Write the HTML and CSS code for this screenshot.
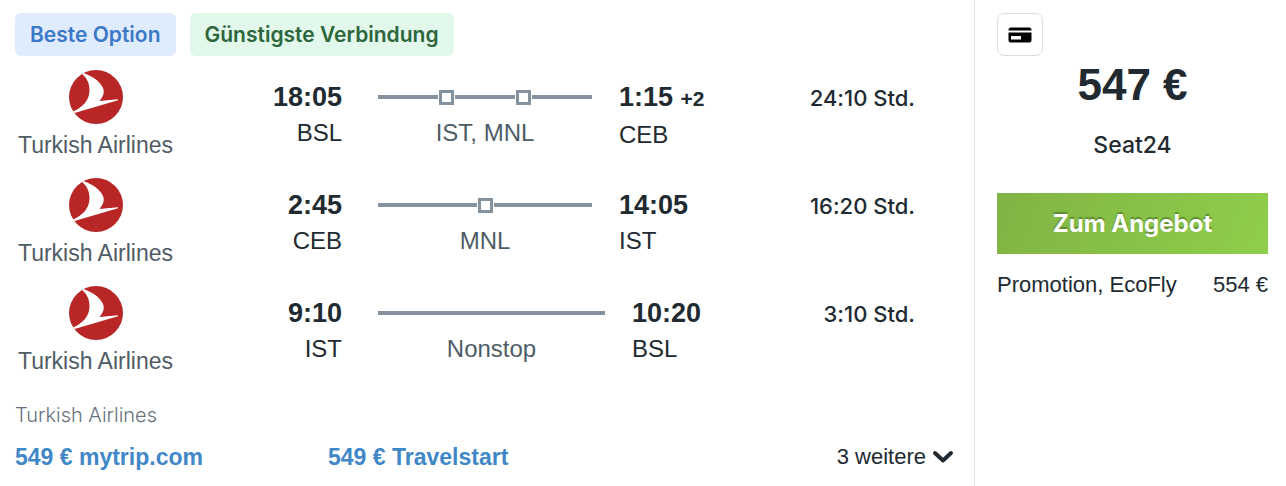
FILE: index.html
```html
<!DOCTYPE html>
<html lang="de">
<head>
    <meta charset="UTF-8">
    <meta name="viewport" content="width=device-width, initial-scale=1">
    <title>Flugangebot</title>
    <link rel="stylesheet" href="styles.css">
</head>
<body>
    <svg class="sprite" aria-hidden="true">
        <symbol id="logo" viewBox="0 0 54 54">
            <circle cx="27" cy="27" r="27" fill="#b92626"/>
            <path d="M14.500 3C23 6 31 11 34 18C36 23 33.500 27 30.500 31L49 29.200V30.200L5.500 43L4 41.500C13 37.500 20.500 31 20.500 20C20.500 13 17.500 7.500 13 4Z" fill="#fff"/>
        </symbol>
    </svg>
    <article class="result">
        <main class="details">
            <div class="badges">
                <span class="badge badge-best">Beste Option</span>
                <span class="badge badge-cheap">Günstigste Verbindung</span>
            </div>

            <section class="leg">
                <div class="airline">
                    <svg class="logo" aria-hidden="true"><use href="#logo"/></svg>
                    <span>Turkish Airlines</span>
                </div>
                <div class="depart"><b class="time">18:05</b><span>BSL</span></div>
                <div class="route">
                    <div class="line"><i></i><em></em><i></i><em></em><i></i></div>
                    <span>IST, MNL</span>
                </div>
                <div class="arrive"><b class="time">1:15 <small>+2</small></b><span>CEB</span></div>
                <div class="duration">24:10 Std.</div>
            </section>

            <section class="leg">
                <div class="airline">
                    <svg class="logo" aria-hidden="true"><use href="#logo"/></svg>
                    <span>Turkish Airlines</span>
                </div>
                <div class="depart"><b class="time">2:45</b><span>CEB</span></div>
                <div class="route">
                    <div class="line"><i></i><em></em><i></i></div>
                    <span>MNL</span>
                </div>
                <div class="arrive"><b class="time">14:05</b><span>IST</span></div>
                <div class="duration">16:20 Std.</div>
            </section>

            <section class="leg leg-nonstop">
                <div class="airline">
                    <svg class="logo" aria-hidden="true"><use href="#logo"/></svg>
                    <span>Turkish Airlines</span>
                </div>
                <div class="depart"><b class="time">9:10</b><span>IST</span></div>
                <div class="route">
                    <div class="line"><i></i></div>
                    <span>Nonstop</span>
                </div>
                <div class="arrive"><b class="time">10:20</b><span>BSL</span></div>
                <div class="duration">3:10 Std.</div>
            </section>

            <p class="operator">Turkish Airlines</p>
            <div class="offers">
                <a href="#">549 € mytrip.com</a>
                <a href="#">549 € Travelstart</a>
                <button type="button" class="more">3 weitere
                    <svg width="22" height="14" viewBox="0 0 22 14" aria-hidden="true"><path d="M3 3L11 10.500L19 3" fill="none" stroke="#212a30" stroke-width="4" stroke-linecap="round" stroke-linejoin="round"/></svg>
                </button>
            </div>
        </main>

        <aside class="booking">
            <button type="button" class="card" aria-label="Zahlungsarten">
                <svg width="24" height="16" viewBox="0 0 24 16" aria-hidden="true">
                    <path d="M0.500 3.500V3Q0.500 0.500 3 0.500H21Q23.500 0.500 23.500 3V3.500Z"/>
                    <path fill-rule="evenodd" d="M0.500 5.500H23.500V13Q23.500 15.500 21 15.500H3Q0.500 15.500 0.500 13ZM3 9V12.500H13V9Z"/>
                </svg>
            </button>
            <div class="price">547 €</div>
            <div class="provider">Seat24</div>
            <button type="button" class="cta">Zum Angebot</button>
            <div class="fare"><span>Promotion, EcoFly</span><span>554 €</span></div>
        </aside>
    </article>
</body>
</html>
```
FILE: styles.css
```css
* {
    box-sizing: border-box;
}
body {
    margin: 0;
    background: #fff;
    color: #212a30;
    font-family: "Liberation Sans", Arial, sans-serif;
    font-size: 24px;
}
button {
    font-family: inherit;
    color: inherit;
    cursor: pointer;
}
.sprite {
    display: none;
}
.result {
    display: flex;
    min-height: 100vh;
}
.details {
    flex: 1;
    padding: 13px 20px 14px 15px;
}
.badges {
    display: flex;
    gap: 14px;
    margin-bottom: 14px;
}
.badge {
    padding: 0 15px;
    border-radius: 6px;
    font-family: Inter, sans-serif;
    font-size: 21px;
    font-weight: 600;
    line-height: 43px;
}
.badge-best {
    background: #dfecfd;
    color: #3c78c8;
}
.badge-cheap {
    background: #e2f8eb;
    color: #2d663c;
}

/* flight legs */
.leg {
    display: grid;
    grid-template-columns: 161px 166px 1fr 86px 210px;
    height: 108px;
    padding-right: 39px;
}
.leg-nonstop {
    grid-template-columns: 161px 166px 1fr 73px 210px;
}
.airline {
    display: flex;
    flex-direction: column;
    align-items: center;
    font-size: 23px;
    line-height: 42px;
    color: #4f5c66;
}
.logo {
    flex: none;
    width: 54px;
    height: 54px;
}
.depart, .arrive, .route {
    display: flex;
    flex-direction: column;
    padding-top: 9px;
    line-height: 36px;
}
.depart {
    text-align: right;
}
.time {
    font-size: 27px;
    white-space: nowrap;
}
.time small {
    font-size: 21px;
}
.route {
    padding-left: 36px;
    padding-right: 27px;
    text-align: center;
    color: #4f5c66;
}
.line {
    display: flex;
    align-items: center;
    gap: 1px;
    height: 36px;
}
.line i {
    flex: 1;
    height: 4px;
    background: #8492a0;
}
.line em {
    width: 15px;
    height: 15px;
    border: 3px solid #8492a0;
}
.duration {
    padding-top: 9px;
    font-family: Inter, sans-serif;
    font-feature-settings: "calt" 0;
    font-size: 22px;
    font-weight: 500;
    line-height: 38px;
    text-align: right;
}

.operator {
    margin: 6px 0 12px;
    font-family: Inter, sans-serif;
    font-size: 20px;
    font-weight: 300;
    line-height: 30px;
    color: #66727e;
}
.offers {
    display: grid;
    grid-template-columns: 1fr 1fr 1fr;
    align-items: center;
    line-height: 30px;
}
.offers a {
    color: #3f87c7;
    font-size: 23px;
    font-weight: bold;
    text-decoration: none;
}
.more {
    display: flex;
    align-items: center;
    justify-content: flex-end;
    gap: 6px;
    padding: 0;
    border: 0;
    background: none;
    font-size: 22px;
    line-height: 30px;
}

/* price column */
.booking {
    display: flex;
    flex-direction: column;
    width: 312px;
    padding: 13px 18px 13px 22px;
    border-left: 1px solid #e1e7ed;
}
.card {
    display: flex;
    align-items: center;
    justify-content: center;
    width: 46px;
    height: 43px;
    padding: 0;
    border: 1px solid #d9e0e6;
    border-radius: 7px;
    background: #fff;
}
.price {
    margin-top: 4px;
    font-size: 44px;
    font-weight: bold;
    line-height: 50px;
    text-align: center;
}
.provider {
    margin: 20px 0 33px;
    font-family: Inter, sans-serif;
    font-size: 23px;
    font-weight: 500;
    line-height: 30px;
    text-align: center;
}
.cta {
    height: 61px;
    border: 0;
    background: linear-gradient(110deg, #80b445, #8fce4a);
    color: #fff;
    font-family: Inter, sans-serif;
    font-size: 24px;
    font-weight: 700;
    text-shadow: 0 -2px 1px #5e8c30;
}
.fare {
    display: flex;
    justify-content: space-between;
    margin-top: 16px;
    font-size: 22px;
    line-height: 30px;
}
```
